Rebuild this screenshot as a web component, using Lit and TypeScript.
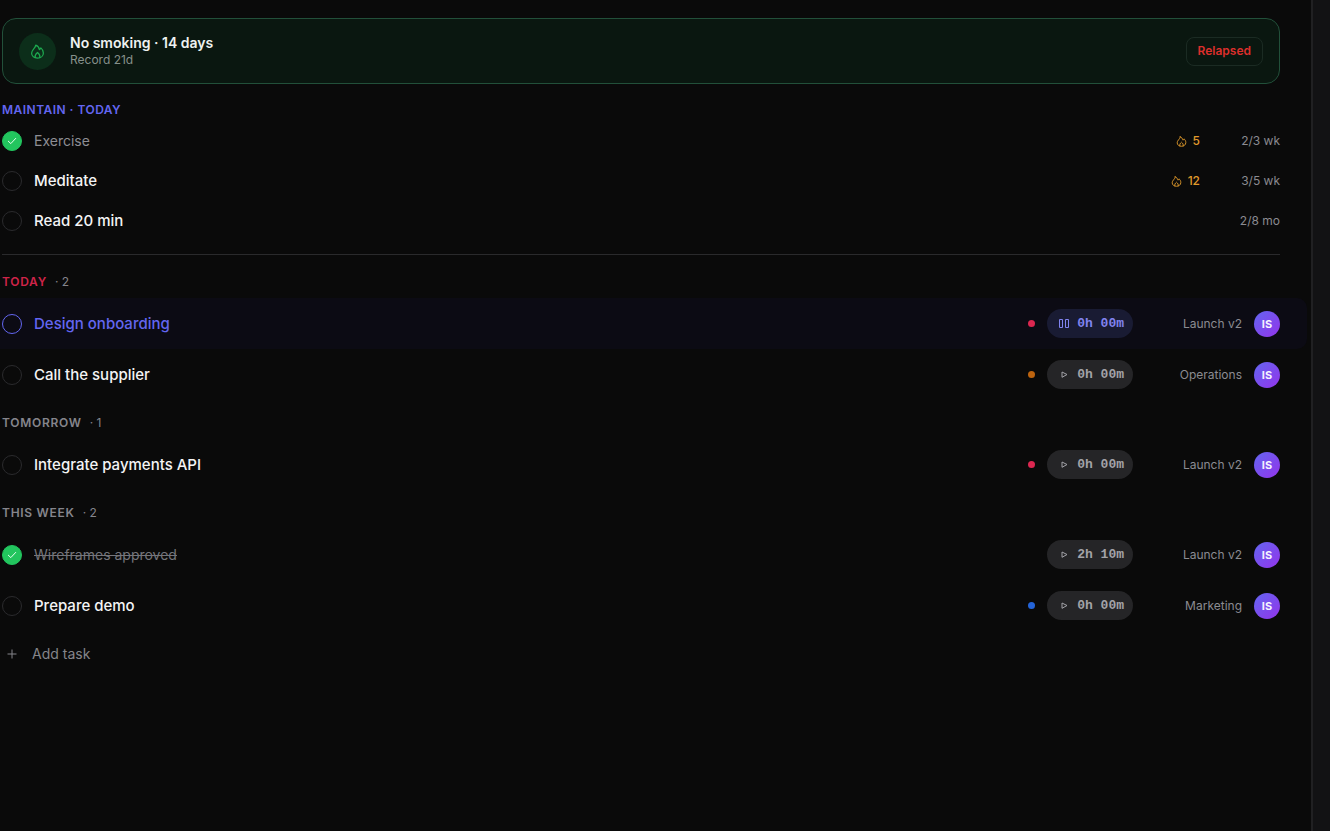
import { LitElement, html, css, svg, nothing } from "lit";
import { customElement, property } from "lit/decorators.js";
import { classMap } from "lit/directives/class-map.js";

interface Habit {
  name: string;
  done: boolean;
  streak?: number;
  progress: string;
}

interface Task {
  name: string;
  project: string;
  time: string;
  priority?: "high" | "medium" | "low";
  done?: boolean;
  running?: boolean;
}

interface Group {
  title: string;
  today?: boolean;
  tasks: Task[];
}

const habits: Habit[] = [
  { name: "Exercise", done: true, streak: 5, progress: "2/3 wk" },
  { name: "Meditate", done: false, streak: 12, progress: "3/5 wk" },
  { name: "Read 20 min", done: false, progress: "2/8 mo" },
];

const groups: Group[] = [
  {
    title: "Today",
    today: true,
    tasks: [
      { name: "Design onboarding", project: "Launch v2", time: "0h 00m", priority: "high", running: true },
      { name: "Call the supplier", project: "Operations", time: "0h 00m", priority: "medium" },
    ],
  },
  {
    title: "Tomorrow",
    tasks: [{ name: "Integrate payments API", project: "Launch v2", time: "0h 00m", priority: "high" }],
  },
  {
    title: "This week",
    tasks: [
      { name: "Wireframes approved", project: "Launch v2", time: "2h 10m", done: true },
      { name: "Prepare demo", project: "Marketing", time: "0h 00m", priority: "low" },
    ],
  },
];

const flame = (size: number) => html`<svg width=${size} height=${size} viewBox="0 0 24 24" fill="none"
  stroke="currentColor" stroke-width="2" stroke-linejoin="round" stroke-linecap="round" aria-hidden="true">
  ${svg`<path d="M9.2 1.8C9 4.6 7.4 6.2 5.4 8.6C3.6 10.8 2.6 12.6 2.6 14.8C2.6 19.4 6.6 22.4 12 22.4C17.4 22.4 21.4 19.2 21.4 14.2C21.4 10.6 19.8 8.2 17.4 6.2C17 7.6 16.4 8.4 15 9C14.6 6 12.6 3.2 9.2 1.8Z"/>
  <path d="M8.2 21.6C7.6 18.2 9.2 15.8 12 13.6C14.8 15.8 16.4 18.2 15.8 21.6"/>`}
</svg>`;

@customElement("round-check")
export class RoundCheck extends LitElement {
  @property({ type: Boolean }) checked = false;
  @property({ type: Boolean }) active = false;
  @property() label = "";

  static styles = css`
    :host {
      display: grid;
      width: 20px;
      height: 20px;
      flex: none;
    }
    .box,
    .mark {
      grid-area: 1 / 1;
    }
    .box {
      appearance: none;
      box-sizing: border-box;
      width: 20px;
      height: 20px;
      margin: 0;
      border: 1px solid #2a2a2d;
      border-radius: 50%;
      cursor: pointer;
    }
    .box:checked {
      background: #22c55e;
      border-color: #22c55e;
    }
    .box.active {
      border-color: #6366f1;
    }
    .mark {
      display: none;
      place-self: center;
      pointer-events: none;
    }
    .box:checked + .mark {
      display: block;
    }
  `;

  render() {
    return html`<input
        class=${classMap({ box: true, active: this.active })}
        type="checkbox"
        aria-label=${this.label}
        .checked=${this.checked}
      /><svg class="mark" width="10" height="10" viewBox="0 0 10 10" fill="none" stroke="#eafff1"
        stroke-linecap="round" stroke-linejoin="round" aria-hidden="true">
        <path d="M1.3 5.2L3.8 7.6L8.7 2.4" />
      </svg>`;
  }
}

@customElement("app-root")
export class AppRoot extends LitElement {
  static styles = css`
    :host {
      display: grid;
      grid-template-columns: minmax(0, 1fr) 19px;
      min-height: 100vh;
      background: #0a0a0a;
      color: #f4f4f5;
      font-family: Inter, "Liberation Sans", sans-serif;
      font-size: 12px;
      line-height: 18px;
    }
    main {
      padding-top: 18px;
    }
    aside {
      background: #121214;
      border-left: 2px solid #202022;
    }
    button {
      font: inherit;
      cursor: pointer;
    }
    svg {
      display: block;
      flex: none;
    }
    .inset {
      margin: 0 31px 0 2px;
    }
    .banner {
      display: flex;
      align-items: center;
      gap: 14px;
      box-sizing: border-box;
      height: 66px;
      padding: 0 16px;
      border: 1px solid #22503a;
      border-radius: 14px;
      background: #0a1710;
    }
    .badge {
      display: grid;
      place-items: center;
      width: 37px;
      height: 37px;
      border-radius: 50%;
      background: #0c2e1a;
      color: #1da94f;
    }
    .banner-text {
      flex: 1;
    }
    .banner-title {
      margin: 0;
      font-size: 14px;
      font-weight: 600;
      line-height: 17px;
      color: #eef2f0;
    }
    .muted {
      margin: 0;
      line-height: 17px;
      color: #86908b;
    }
    .relapsed {
      height: 29px;
      padding: 0 11px;
      border: 1px solid #1b2b23;
      border-radius: 8px;
      background: transparent;
      font-weight: 600;
      color: #dc2f2c;
    }
    .heading {
      margin: 0;
      font-size: 12px;
      font-weight: 600;
      letter-spacing: 0.06em;
      text-transform: uppercase;
      color: #85858c;
    }
    .heading.maintain {
      padding: 17px 0 2px 2px;
      letter-spacing: 0.04em;
      color: #6366f1;
    }
    .heading.group {
      padding: 14px 0 7px 2px;
    }
    .heading.today {
      color: #cf2449;
    }
    .count {
      margin-left: 8px;
      font-weight: 400;
      letter-spacing: 0;
      color: #85858c;
    }
    .rows {
      list-style: none;
      margin: 0;
      padding: 0;
    }
    .habit,
    .task {
      display: flex;
      align-items: center;
      padding-left: 2px;
      margin-right: 4px;
    }
    .habit {
      height: 40px;
      padding-right: 27px;
    }
    .task {
      height: 51px;
      padding-right: 27px;
      border-radius: 0 10px 10px 0;
    }
    .task.running {
      background: #0c0b14;
    }
    .name {
      flex: 1;
      padding-left: 12px;
      font-size: 15px;
      font-weight: 500;
      line-height: 20px;
    }
    .name.done {
      font-size: 14px;
      font-weight: 400;
      color: #8e8e94;
    }
    .task .done {
      color: #75757b;
      text-decoration: line-through;
    }
    .running .name {
      color: #6366f1;
    }
    .streak {
      display: flex;
      align-items: center;
      gap: 6px;
      font-weight: 500;
      color: #e09a2c;
    }
    .progress,
    .project {
      text-align: right;
      color: #8b8b91;
    }
    .progress {
      width: 80px;
    }
    .project {
      width: 109px;
      margin-right: 12px;
    }
    .dot {
      width: 7px;
      height: 7px;
      margin-right: 12px;
      border-radius: 50%;
    }
    .high {
      background: #dc2750;
    }
    .medium {
      background: #bd640f;
    }
    .low {
      background: #2464d8;
    }
    .timer {
      display: flex;
      align-items: center;
      justify-content: flex-end;
      gap: 7px;
      width: 86px;
      height: 29px;
      padding: 0 9px 0 0;
      border: 0;
      border-radius: 15px;
      background: #252527;
      color: #a3a3a8;
      font-family: "Liberation Mono", "DejaVu Sans Mono", monospace;
      font-size: 13px;
      font-weight: 700;
    }
    .running .timer {
      background: #191b33;
      color: #8184f0;
    }
    .avatar {
      display: grid;
      place-items: center;
      width: 26px;
      height: 26px;
      border-radius: 50%;
      background: linear-gradient(135deg, #6366f1, #9333ea);
      font-size: 11px;
      font-weight: 700;
      color: #f5f3ff;
    }
    .divider {
      height: 1px;
      margin-top: 13px;
      margin-bottom: 4px;
      border: 0;
      background: #2a2a2c;
    }
    .add {
      display: flex;
      align-items: center;
      gap: 15px;
      margin-top: 10px;
      padding: 0 8px 0 7px;
      height: 26px;
      border: 0;
      background: none;
      font-size: 14px;
      color: #85858b;
    }
  `;

  private habitRow(habit: Habit) {
    return html`<li class="habit">
      <round-check .checked=${habit.done} .label=${habit.name}></round-check>
      <span class=${classMap({ name: true, done: habit.done })}>${habit.name}</span>
      ${habit.streak ? html`<span class="streak">${flame(11)}<span>${habit.streak}</span></span>` : nothing}
      <span class="progress">${habit.progress}</span>
    </li>`;
  }

  private taskRow(task: Task) {
    const icon = task.running
      ? svg`<path d="M0.5 1.5h3v8h-3zM6.5 1.5h3v8h-3z"/>`
      : svg`<path d="M3 3L8 5.5L3 8.3Z"/>`;
    return html`<li class=${classMap({ task: true, running: !!task.running })}>
      <round-check .checked=${!!task.done} .active=${!!task.running} .label=${task.name}></round-check>
      <span class=${classMap({ name: true, done: !!task.done })}>${task.name}</span>
      ${task.priority ? html`<span class="dot ${task.priority}"></span>` : nothing}
      <button class="timer" type="button" aria-label="${task.running ? "Pause" : "Start"} timer, ${task.time}">
        <svg width="11" height="11" viewBox="0 0 11 11" fill="none" stroke="currentColor" stroke-linejoin="round"
          aria-hidden="true">${icon}</svg>
        <span>${task.time}</span>
      </button>
      <span class="project">${task.project}</span>
      <span class="avatar">IS</span>
    </li>`;
  }

  render() {
    return html`<main>
        <section class="inset banner">
          <span class="badge">${flame(15)}</span>
          <div class="banner-text">
            <h1 class="banner-title">No smoking · 14 days</h1>
            <p class="muted">Record 21d</p>
          </div>
          <button class="relapsed" type="button">Relapsed</button>
        </section>
        <section>
          <h2 class="heading maintain">Maintain · Today</h2>
          <ul class="rows">${habits.map((h) => this.habitRow(h))}</ul>
        </section>
        <hr class="inset divider" />
        ${groups.map(
          (g) => html`<section>
            <h2 class=${classMap({ heading: true, group: true, today: !!g.today })}
              >${g.title}<span class="count">· ${g.tasks.length}</span></h2>
            <ul class="rows">${g.tasks.map((t) => this.taskRow(t))}</ul>
          </section>`
        )}
        <button class="add" type="button">
          <svg width="10" height="10" viewBox="0 0 10 10" stroke="currentColor" aria-hidden="true">
            <path d="M5 0.5V9.5M0.5 5H9.5" />
          </svg>
          Add task
        </button>
      </main>
      <aside></aside>`;
  }
}
